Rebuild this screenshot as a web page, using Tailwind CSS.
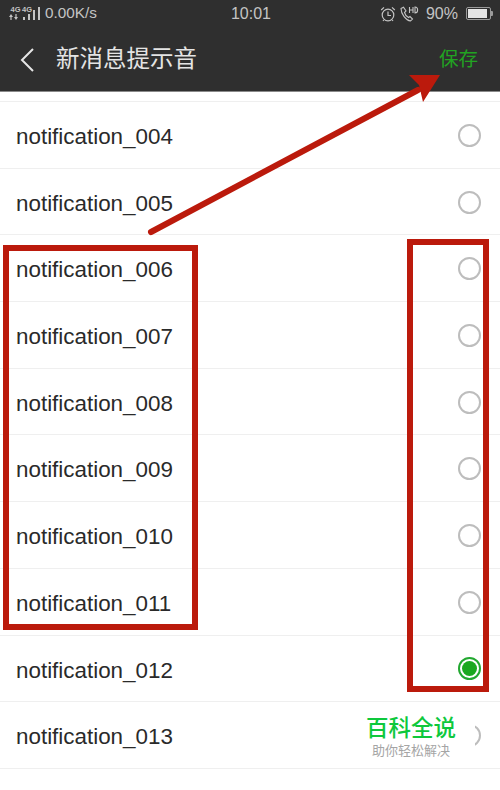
<!DOCTYPE html>
<html lang="zh">
  <head>
    <meta charset="UTF-8" />
    <title>新消息提示音</title>
    <script src="https://cdn.jsdelivr.net/npm/@tailwindcss/browser@4"></script>
  </head>
  <body class="bg-white">
    <div class="relative w-[500px] h-[790px] overflow-hidden bg-white font-['Liberation_Sans','Noto_Sans_CJK_SC',sans-serif]">
      <!-- Status bar + nav -->
      <div class="h-[92px] bg-[#2f2f2f] border-b border-[#8a8a8a] flex flex-col">
        <div class="h-[27px] flex items-center justify-between pl-[9px] pr-[7px] text-[#c4c4c4] text-[15.3px]">
          <div class="w-[200px] flex items-center">
            <div class="w-[23px] flex flex-col -mt-[1px]">
              <div class="flex text-[7.5px] font-bold leading-[7px]">
                <span class="w-[13px] text-center">4G</span>
                <span class="w-[10px] text-center">4G</span>
              </div>
              <svg width="23" height="6" viewBox="0 0 23 6" fill="#c4c4c4" class="mt-[1px]">
                <path d="M2 0L4 3H2.6V6H1.4V3H0ZM7 6L5 3H6.4V0H7.6V3H9Z" />
                <rect x="14" y="3" width="2" height="3" />
                <rect x="19" y="0" width="2" height="6" />
              </svg>
            </div>
            <svg width="8" height="14" viewBox="0 0 8 14" fill="#c4c4c4">
              <rect x="1" y="3" width="2" height="10" />
              <rect x="6" y="0" width="2" height="13" />
            </svg>
            <span class="ml-[5px]">0.00K/s</span>
          </div>
          <span class="text-[16px]">10:01</span>
          <div class="w-[200px] flex items-center justify-end">
            <svg width="16" height="16" viewBox="0 0 16 16" fill="none" stroke="#c4c4c4" stroke-width="1.2" class="mr-[3px]">
              <circle cx="8" cy="9" r="5.8" />
              <path d="M8 5.5V9.5H11M1.2 4L4 1.4M14.8 4L12 1.4M3.8 14L3 15M12.2 14L13 15" />
            </svg>
            <svg width="20" height="16" viewBox="0 0 20 16" fill="none" stroke="#c4c4c4" stroke-width="1.1" class="mr-[7px]">
              <path d="M2 2.5L4.5 1.2L7 5L5.5 6.5C6 8.5 7.5 10.5 9.5 11.5L11 10.5L13.5 13L11.5 15C7 14.5 2 8 2 2.5Z" />
              <path d="M10.5 1V7M14 1V7M10.5 4H14M16 1V7C19.5 7 19.5 1 16 1Z" />
            </svg>
            <span class="text-[16px] mr-[8px]">90%</span>
            <div class="w-[25px] h-[13px] border border-[#9a9a9a] rounded-[2px] p-[1px]">
              <div class="w-[90%] h-full bg-[#e4e4e4]"></div>
            </div>
            <div class="w-[2px] h-[5px] bg-[#9a9a9a] rounded-r-[1px]"></div>
          </div>
        </div>
        <div class="flex-1 flex items-center justify-between pt-[2px] pl-[20px] pr-[22px]">
          <div class="flex items-center">
            <svg width="14" height="24" viewBox="0 0 14 24" fill="none" stroke="#e6e6e6" stroke-width="2">
              <path d="M13 1L2 12L13 23" />
            </svg>
            <span class="ml-[22px] text-[23.5px] text-[#e4e4e4]">新消息提示音</span>
          </div>
          <span class="text-[19.5px] text-[#22a322]">保存</span>
        </div>
      </div>

      <!-- List -->
      <div class="h-[9px] border-b border-[#efefef] box-content"></div>
      <div class="flex flex-col text-[22.4px] text-[#2a2a2a]">
        <div class="h-[66.7px] border-b border-[#efefef] flex items-center justify-between pl-[16px] pr-[19px]">
          <span class="mt-[4px]">notification_004</span>
          <div class="mt-[1px] size-[23px] rounded-full border-2 border-[#bdbdbd]"></div>
        </div>
        <div class="h-[66.7px] border-b border-[#efefef] flex items-center justify-between pl-[16px] pr-[19px]">
          <span class="mt-[4px]">notification_005</span>
          <div class="mt-[1px] size-[23px] rounded-full border-2 border-[#bdbdbd]"></div>
        </div>
        <div class="h-[66.7px] border-b border-[#efefef] flex items-center justify-between pl-[16px] pr-[19px]">
          <span class="mt-[4px]">notification_006</span>
          <div class="mt-[1px] size-[23px] rounded-full border-2 border-[#bdbdbd]"></div>
        </div>
        <div class="h-[66.7px] border-b border-[#efefef] flex items-center justify-between pl-[16px] pr-[19px]">
          <span class="mt-[4px]">notification_007</span>
          <div class="mt-[1px] size-[23px] rounded-full border-2 border-[#bdbdbd]"></div>
        </div>
        <div class="h-[66.7px] border-b border-[#efefef] flex items-center justify-between pl-[16px] pr-[19px]">
          <span class="mt-[4px]">notification_008</span>
          <div class="mt-[1px] size-[23px] rounded-full border-2 border-[#bdbdbd]"></div>
        </div>
        <div class="h-[66.7px] border-b border-[#efefef] flex items-center justify-between pl-[16px] pr-[19px]">
          <span class="mt-[4px]">notification_009</span>
          <div class="mt-[1px] size-[23px] rounded-full border-2 border-[#bdbdbd]"></div>
        </div>
        <div class="h-[66.7px] border-b border-[#efefef] flex items-center justify-between pl-[16px] pr-[19px]">
          <span class="mt-[4px]">notification_010</span>
          <div class="mt-[1px] size-[23px] rounded-full border-2 border-[#bdbdbd]"></div>
        </div>
        <div class="h-[66.7px] border-b border-[#efefef] flex items-center justify-between pl-[16px] pr-[19px]">
          <span class="mt-[4px]">notification_011</span>
          <div class="mt-[1px] size-[23px] rounded-full border-2 border-[#bdbdbd]"></div>
        </div>
        <div class="h-[66.7px] border-b border-[#efefef] flex items-center justify-between pl-[16px] pr-[19px]">
          <span class="mt-[4px]">notification_012</span>
          <div class="mt-[1px] size-[23px] rounded-full border-2 border-[#22a830] flex items-center justify-center">
            <div class="size-[15px] rounded-full bg-[#1aa81f]"></div>
          </div>
        </div>
        <div class="h-[66.7px] border-b border-[#efefef] flex items-center justify-between pl-[16px] pr-[19px]">
          <span class="mt-[4px]">notification_013</span>
          <div class="mt-[1px] size-[23px] rounded-full border-2 border-[#bdbdbd]"></div>
        </div>
      </div>

      <!-- Red annotations -->
      <div class="absolute left-[3px] top-[245px] w-[195px] h-[385px] border-[6px] border-[#bb1a0c]"></div>
      <div class="absolute left-[407px] top-[239px] w-[82px] h-[453px] border-[6px] border-[#bb1a0c]"></div>
      <svg class="absolute left-0 top-0" width="500" height="790" viewBox="0 0 500 790" fill="none">
        <path d="M151 232L418 90" stroke="#bb1a0c" stroke-width="6" stroke-linecap="round" />
        <path d="M440 75L409 75L419 85L423 102Z" fill="#bb1a0c" />
      </svg>

      <!-- Watermark -->
      <div class="absolute left-[355px] top-[716px] w-[120px] h-[46px] pr-[8px] bg-white flex flex-col items-center">
        <span class="text-[22.5px] leading-[26px] font-medium text-[#0ec83c]">百科全说</span>
        <span class="text-[13px] leading-[17px] text-[#a5a5a5]">助你轻松解决</span>
      </div>
    </div>
  </body>
</html>
